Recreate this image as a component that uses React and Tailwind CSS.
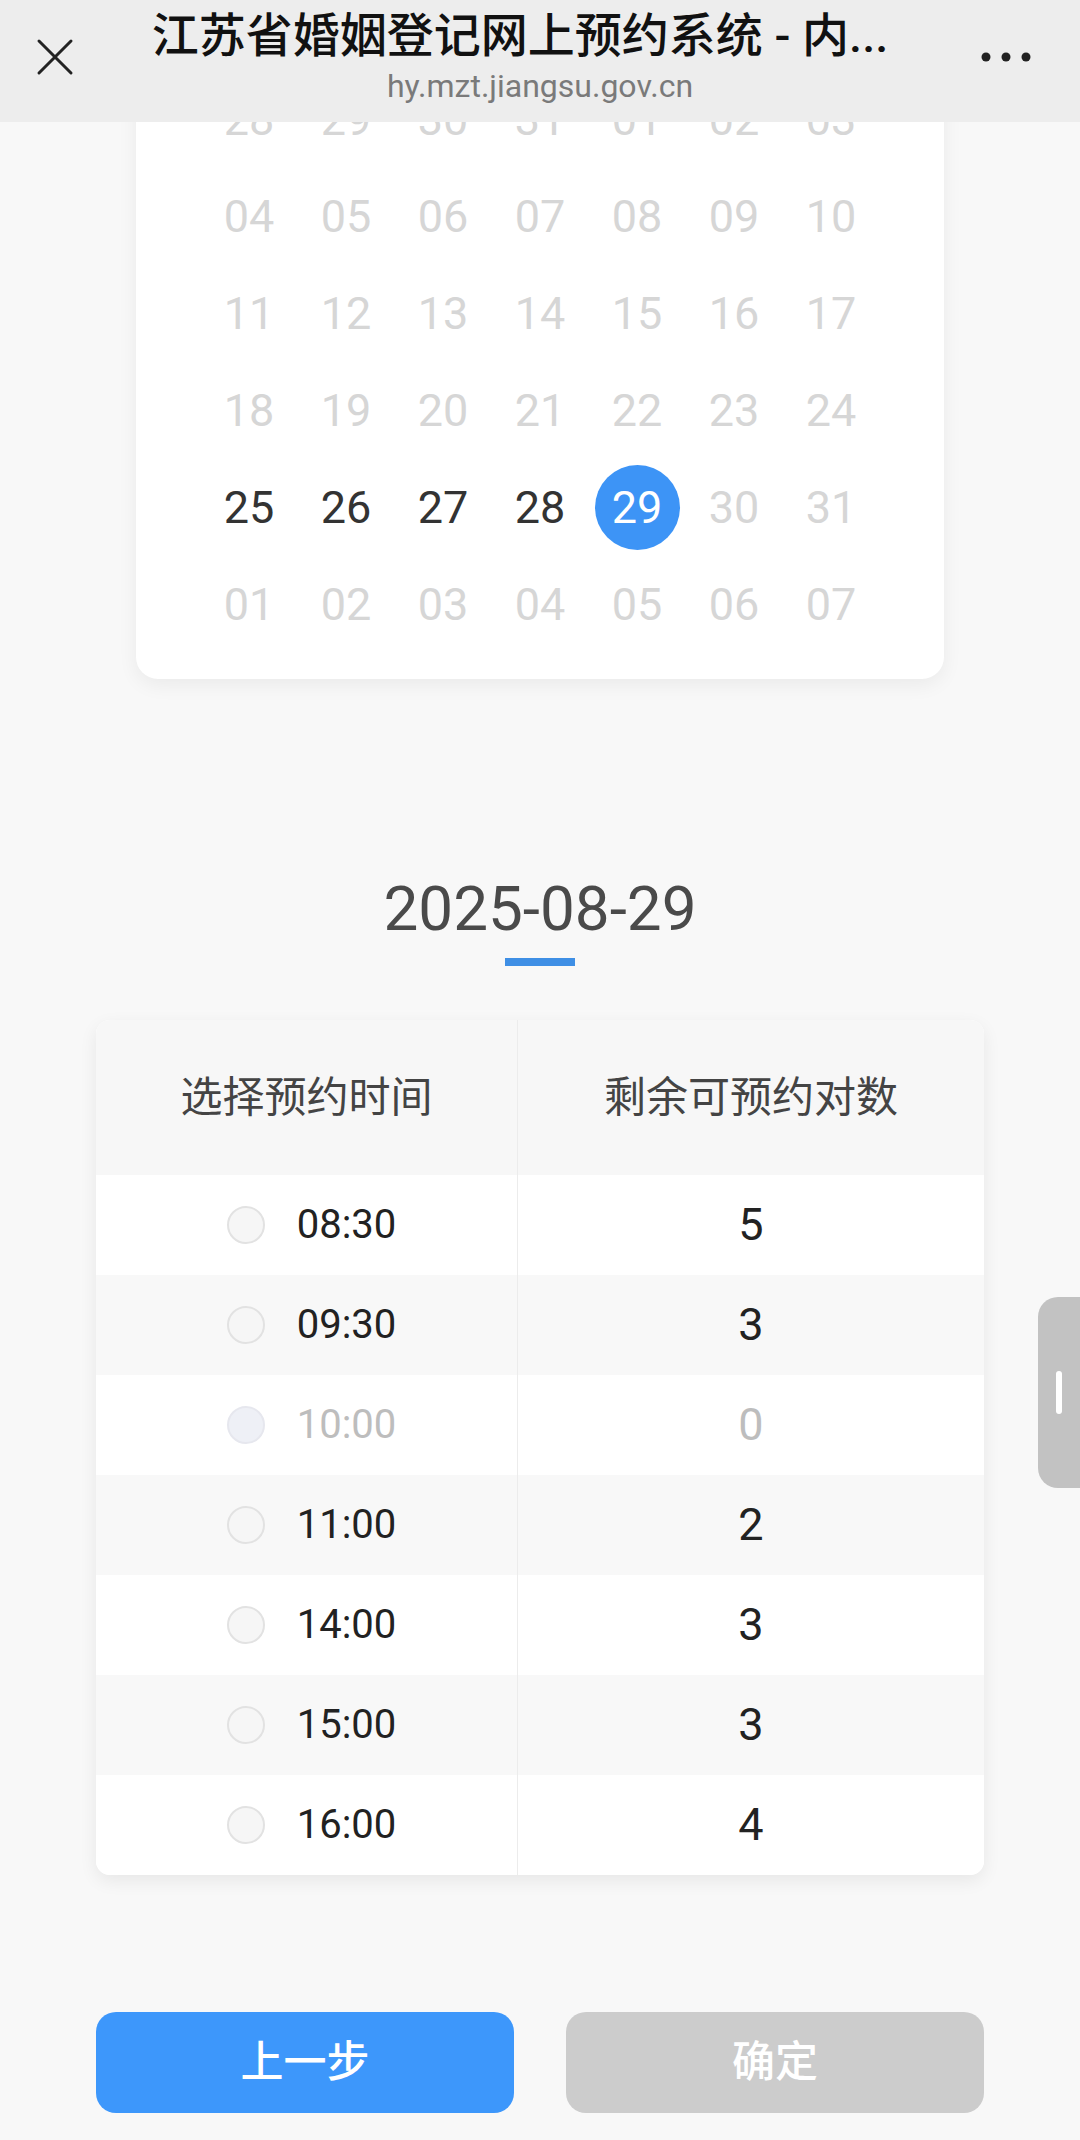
import React from 'react';

const weeks = [
  ['28', '29', '30', '31', '01', '02', '03'],
  ['04', '05', '06', '07', '08', '09', '10'],
  ['11', '12', '13', '14', '15', '16', '17'],
  ['18', '19', '20', '21', '22', '23', '24'],
  ['25', '26', '27', '28', '29', '30', '31'],
  ['01', '02', '03', '04', '05', '06', '07'],
];

const slots = [
  { time: '08:30', left: 5 },
  { time: '09:30', left: 3 },
  { time: '10:00', left: 0, disabled: true },
  { time: '11:00', left: 2 },
  { time: '14:00', left: 3 },
  { time: '15:00', left: 3 },
  { time: '16:00', left: 4 },
];

const dayState = (w, d) => {
  if (w === 4 && d < 4) return 'active';
  if (w === 4 && d === 4) return 'selected';
  return 'muted';
};

const TopBar = () => (
  <header className="relative z-10 flex h-[122px] bg-[#ededed]">
    <div className="flex w-[110px] items-center justify-center pb-[8px]">
      <svg width="38" height="38" viewBox="0 0 38 38" fill="none" stroke="#222" strokeWidth="3" strokeLinecap="round">
        <path d="M3 3L35 35M35 3L3 35" />
      </svg>
    </div>
    <div className="flex flex-1 flex-col items-center pt-[10px]">
      <div className="mr-[40px] text-[47px] font-medium leading-[52px] text-[#111]">
        江苏省婚姻登记网上预约系统 - 内...
      </div>
      <div className="mt-[6px] text-[32px] leading-[36px] text-[#7a7a7a]">hy.mzt.jiangsu.gov.cn</div>
    </div>
    <div className="flex w-[110px] items-center pb-[8px] pl-[11px]">
      <svg width="50" height="10" viewBox="0 0 50 10" fill="#222">
        <circle cx="5" cy="5" r="4.5" />
        <circle cx="25" cy="5" r="4.5" />
        <circle cx="45" cy="5" r="4.5" />
      </svg>
    </div>
  </header>
);

const Calendar = () => (
  <div className="flex justify-center overflow-hidden pb-[30px]">
    <div className="-mt-[51px] w-[808px] rounded-[22px] bg-white pb-[26px] shadow-[0_6px_20px_rgba(0,0,0,0.06)]">
      <div className="mx-auto grid w-[679px] grid-cols-7">
        {weeks.map((week, w) =>
          week.map((day, d) => {
            const state = dayState(w, d);
            return (
              <div key={`${w}-${d}`} className="flex h-[97px] items-center justify-center text-[45px]">
                {state === 'selected' ? (
                  <span className="flex h-[85px] w-[85px] items-center justify-center rounded-full bg-[#3d94f6] text-white">
                    {day}
                  </span>
                ) : (
                  <span className={state === 'active' ? 'text-[#333]' : 'text-[#d6d6d6]'}>{day}</span>
                )}
              </div>
            );
          })
        )}
      </div>
    </div>
  </div>
);

const Radio = ({ disabled }) => (
  <span
    className={
      disabled
        ? 'h-[38px] w-[38px] rounded-full border-2 border-[#e6e7ee] bg-[#eef0f6]'
        : 'h-[38px] w-[38px] rounded-full border-2 border-[#e2e2e2] bg-[#f6f6f6]'
    }
  />
);

const SlotTable = () => (
  <div className="mx-[96px] mt-[54px] overflow-hidden rounded-[14px] bg-white shadow-[0_6px_18px_rgba(0,0,0,0.07)]">
    <div className="grid grid-cols-[422px_1fr] bg-[#f7f7f7] text-[42px] text-[#444]">
      <div className="flex h-[155px] items-center justify-center border-r border-[#ececec]">选择预约时间</div>
      <div className="flex h-[155px] items-center justify-center">剩余可预约对数</div>
    </div>
    {slots.map((s, i) => (
      <div
        key={s.time}
        className={i % 2 === 1 ? 'grid grid-cols-[422px_1fr] bg-[#f8f8f8]' : 'grid grid-cols-[422px_1fr] bg-white'}
      >
        <div className="flex h-[100px] items-center justify-center gap-[32px] border-r border-[#ececec] pl-[10px]">
          <Radio disabled={s.disabled} />
          <span className={s.disabled ? 'text-[40px] text-[#bdbdbd]' : 'text-[40px] text-[#222]'}>{s.time}</span>
        </div>
        <div
          className={
            s.disabled
              ? 'flex h-[100px] items-center justify-center text-[45px] text-[#bdbdbd]'
              : 'flex h-[100px] items-center justify-center text-[45px] text-[#222]'
          }
        >
          {s.left}
        </div>
      </div>
    ))}
  </div>
);

export default function App() {
  return (
    <div className="relative min-h-[2140px] bg-[#f8f8f8] font-['Roboto','Noto_Sans_CJK_SC',sans-serif]">
      <TopBar />
      <Calendar />

      <div className="mt-[169px] text-center text-[62px] leading-[62px] text-[#4a4a4a]">2025-08-29</div>
      <div className="mx-auto mt-[18px] h-[8px] w-[70px] bg-[#3f8fe5]" />

      <SlotTable />

      <div className="mx-[96px] mt-[137px] flex justify-between">
        <button className="h-[101px] w-[418px] rounded-[20px] bg-[#3d97fb] text-[43px] font-medium text-white">
          上一步
        </button>
        <button className="h-[101px] w-[418px] rounded-[20px] bg-[#cccccc] text-[43px] font-medium text-white">
          确定
        </button>
      </div>

      <div className="absolute right-0 top-[1297px] flex h-[191px] w-[42px] items-center justify-center rounded-l-[20px] bg-[#c2c2c2]">
        <span className="h-[43px] w-[6px] rounded-full bg-white" />
      </div>
    </div>
  );
}
